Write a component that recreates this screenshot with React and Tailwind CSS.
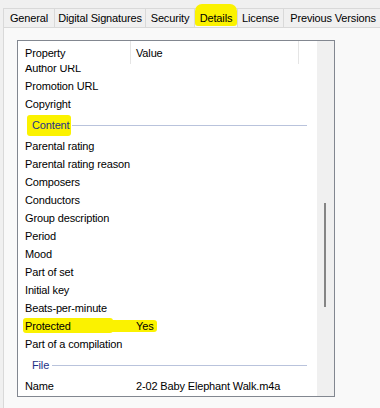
const font = { fontFamily: '"Liberation Sans", Arial, sans-serif' };

const tabs = [
  { label: "General", w: "w-[52px]" },
  { label: "Digital Signatures", w: "w-[92px]" },
  { label: "Security", w: "w-[50px]" },
  { label: "Details", w: "w-[44px]", active: true },
  { label: "License", w: "w-[47px]" },
  { label: "Previous Versions", w: "w-[100px]" },
];

const rows = [
  { type: "row", name: "Author URL" },
  { type: "row", name: "Promotion URL" },
  { type: "row", name: "Copyright" },
  { type: "group", name: "Content", mark: true },
  { type: "row", name: "Parental rating" },
  { type: "row", name: "Parental rating reason" },
  { type: "row", name: "Composers" },
  { type: "row", name: "Conductors" },
  { type: "row", name: "Group description" },
  { type: "row", name: "Period" },
  { type: "row", name: "Mood" },
  { type: "row", name: "Part of set" },
  { type: "row", name: "Initial key" },
  { type: "row", name: "Beats-per-minute" },
  { type: "row", name: "Protected", value: "Yes", mark: true },
  { type: "row", name: "Part of a compilation" },
  { type: "group", name: "File" },
  { type: "row", name: "Name", value: "2-02 Baby Elephant Walk.m4a" },
];

function Tab({ tab }) {
  return (
    <div
      className={`${tab.w} relative h-[19px] shrink-0 border border-b-0 border-[#d9d9d9] bg-[#f0f0f0] -mr-px flex items-center justify-center whitespace-nowrap ${
        tab.active ? "z-10 bg-[#f9f9f9]" : ""
      }`}
    >
      {tab.active && (
        <div className="absolute left-0 right-0 -top-[5px] bottom-[1px] rounded-t-[7px] rounded-b-[3px] bg-[#fbf200]" />
      )}
      <span className="relative">{tab.label}</span>
    </div>
  );
}

function GroupRow({ row }) {
  return (
    <div className="h-[24px] flex items-center pl-[14px] pr-[10px]">
      <span className="relative text-[#1e3287] shrink-0">
        {row.mark && (
          <span className="absolute -left-[5px] -right-[2px] -top-[2px] -bottom-[3px] rounded-[3px] bg-[#fbf200]" />
        )}
        <span className="relative">{row.name}</span>
      </span>
      <div className="ml-[3px] flex-1 h-px bg-[#b9c3dc]" />
    </div>
  );
}

function DataRow({ row }) {
  return (
    <div className="relative h-[18px] flex items-center">
      {row.mark && (
        <>
          <div className="absolute left-[5px] w-[90px] top-[1px] h-[15px] rounded-[3px] bg-[#fbf200]" />
          <div className="absolute left-[90px] w-[49px] top-[3px] h-[12px] rounded-[3px] bg-[#fbf200]" />
        </>
      )}
      <span className="relative w-[118px] pl-[7px] shrink-0 whitespace-nowrap">{row.name}</span>
      {row.value && <span className="relative whitespace-nowrap">{row.value}</span>}
    </div>
  );
}

export default function App() {
  return (
    <div
      className="w-[380px] h-[408px] bg-[#f0f0f0] pt-[8px] flex flex-col overflow-hidden text-[11px] tracking-[-0.15px] text-black"
      style={font}
    >
      <div className="flex pl-[3px]">
        {tabs.map((t) => (
          <Tab key={t.label} tab={t} />
        ))}
      </div>
      <div className="ml-[3px] flex-1 border-l border-t border-[#d9d9d9] bg-[#f9f9f9] pl-[13px] pt-[12px]">
        <div className="w-[318px] h-[357px] border border-[#828790] bg-white flex">
          <div className="flex-1 flex flex-col overflow-hidden">
            <div className="relative z-10 h-[24px] shrink-0 bg-white flex items-center">
              <span className="w-[118px] pl-[7px]">Property</span>
              <span>Value</span>
              <div className="absolute left-[112px] top-0 h-[23px] w-px bg-[#e5e5e5]" />
              <div className="absolute left-[280px] top-0 h-[23px] w-px bg-[#e5e5e5]" />
            </div>
            <div className="-mt-[6px] flex flex-col">
              {rows.map((r) =>
                r.type === "group" ? <GroupRow key={r.name} row={r} /> : <DataRow key={r.name} row={r} />
              )}
            </div>
          </div>
          <div className="w-[17px] shrink-0 bg-[#f0f0f0] flex flex-col pt-[162px] pl-[7px]">
            <div className="w-[2px] h-[104px] bg-[#858585]" />
          </div>
        </div>
      </div>
    </div>
  );
}
